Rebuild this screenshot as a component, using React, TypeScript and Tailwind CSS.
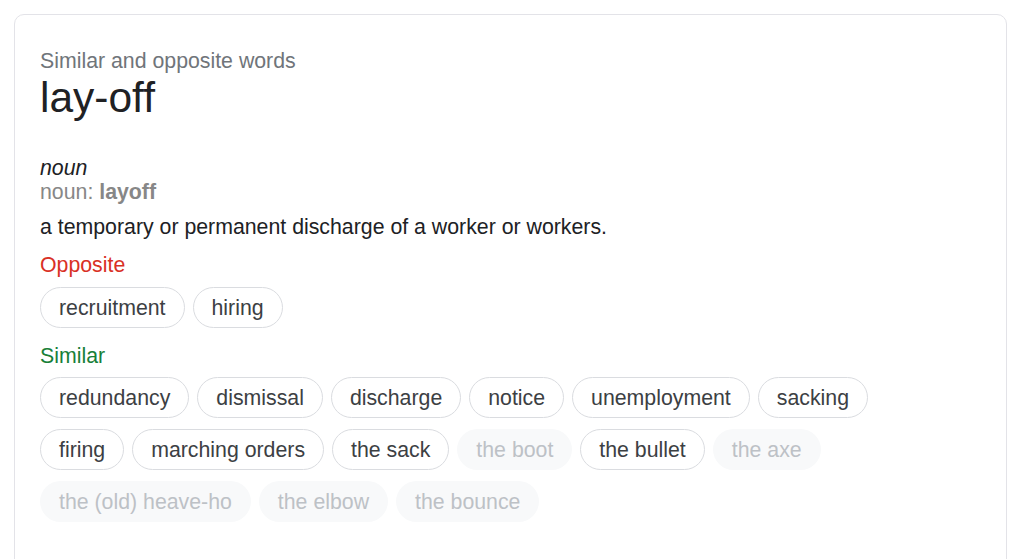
import React from "react";

type Chip = { t: string; off?: boolean };

const rows: Chip[][] = [
  [
    { t: "redundancy" },
    { t: "dismissal" },
    { t: "discharge" },
    { t: "notice" },
    { t: "unemployment" },
    { t: "sacking" },
  ],
  [
    { t: "firing" },
    { t: "marching orders" },
    { t: "the sack" },
    { t: "the boot", off: true },
    { t: "the bullet" },
    { t: "the axe", off: true },
  ],
  [
    { t: "the (old) heave-ho", off: true },
    { t: "the elbow", off: true },
    { t: "the bounce", off: true },
  ],
];

function ChipEl({ c }: { c: Chip }) {
  return c.off ? (
    <span className="flex h-[41px] items-center rounded-full border border-transparent bg-[#f8f9fa] px-[18px] text-[21.3px] leading-[24px] text-[#bdc1c6]">
      {c.t}
    </span>
  ) : (
    <span className="flex h-[41px] items-center rounded-full border border-[#dadce0] bg-white px-[18px] text-[21.3px] leading-[24px] text-[#3c4043]">
      {c.t}
    </span>
  );
}

export default function App() {
  return (
    <div
      className="h-[559px] w-[1022px] overflow-hidden bg-white pt-[14px] pl-[14px]"
      style={{ fontFamily: '"Liberation Sans", Arial, sans-serif' }}
    >
      <div className="h-[600px] w-[993px] rounded-[10px] border border-[#e3e3e8] pt-[34px] pl-[25px]">
        <div className="text-[21.3px] leading-[24px] text-[#70757a]">Similar and opposite words</div>
        <div className="mt-[1px] text-[42.5px] leading-[48px] text-[#202124]">lay-off</div>
        <div className="mt-[34px] text-[21.3px] italic leading-[24px] text-[#202124]">noun</div>
        <div className="text-[21.3px] leading-[24px] text-[#878787]">
          noun: <span className="font-bold">layoff</span>
        </div>
        <div className="mt-[11px] text-[21.3px] leading-[24px] text-[#202124]">
          a temporary or permanent discharge of a worker or workers.
        </div>
        <div className="mt-[14px] text-[21.3px] leading-[24px] text-[#d93025]">Opposite</div>
        <div className="mt-[10px] flex gap-[8px]">
          <ChipEl c={{ t: "recruitment" }} />
          <ChipEl c={{ t: "hiring" }} />
        </div>
        <div className="mt-[16px] text-[21.3px] leading-[24px] text-[#188038]">Similar</div>
        <div className="mt-[9px] flex flex-col gap-[11px]">
          {rows.map((r, i) => (
            <div key={i} className="flex gap-[8px]">
              {r.map((c) => (
                <ChipEl key={c.t} c={c} />
              ))}
            </div>
          ))}
        </div>
      </div>
    </div>
  );
}
